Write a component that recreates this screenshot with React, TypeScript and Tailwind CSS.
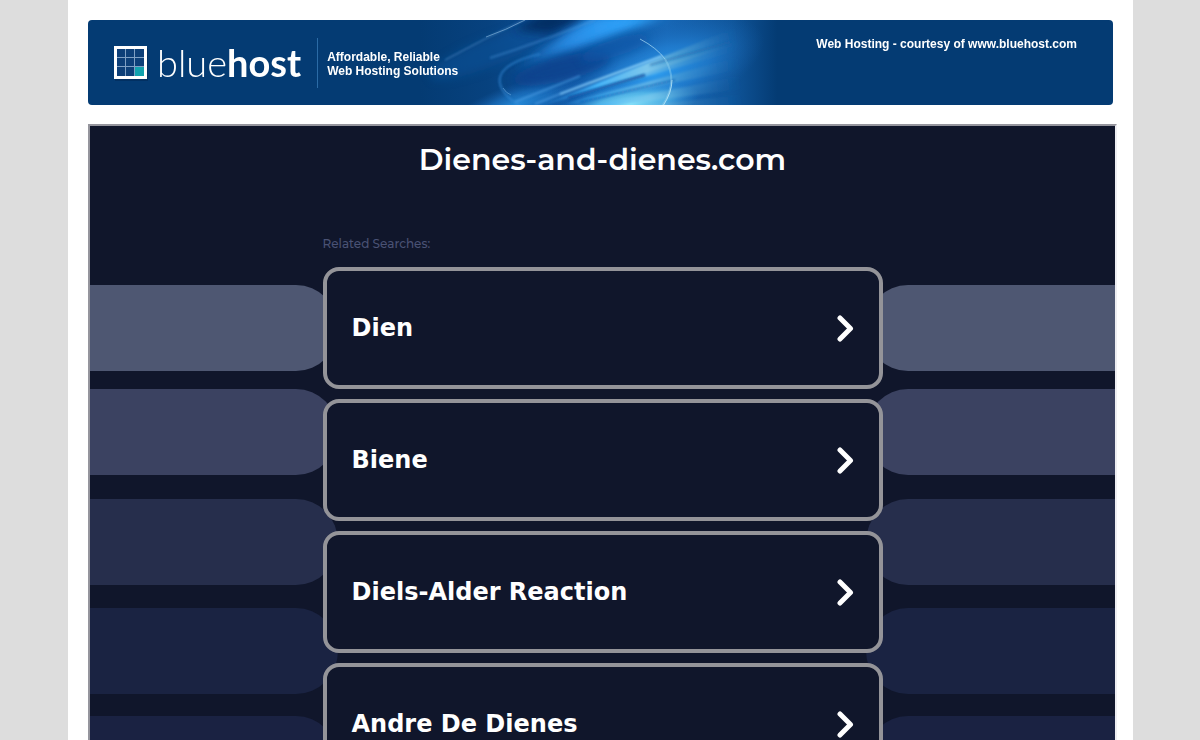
const searches = ['Dien', 'Biene', 'Diels-Alder Reaction', 'Andre De Dienes'];

const stripes = [
  { y: 159, color: '#4e5772' },
  { y: 263, color: '#3b4261' },
  { y: 373, color: '#262e4c' },
  { y: 482, color: '#1a2342' },
  { y: 590, color: '#1a2242' },
];

function GridLogo() {
  return (
    <svg className="size-9 shrink-0" viewBox="0 0 36 36" aria-hidden="true">
      <rect x="2" y="3" width="33" height="33" fill="#022a56" opacity=".6" />
      <rect x="1" y="1" width="33" height="33" fill="#fff" />
      <rect x="4" y="4" width="27" height="27" fill="#7fa0c4" />
      {[4, 13, 22].map((y) =>
        [4, 13, 22].map((x) => (
          <rect
            key={`${x}-${y}`}
            x={x}
            y={y}
            width={x === 22 ? 9 : 8}
            height={y === 22 ? 9 : 8}
            fill={x === 22 && y === 22 ? '#12a2ae' : '#0d3f78'}
          />
        )),
      )}
    </svg>
  );
}

function Swirl() {
  return (
    <svg
      className="pointer-events-none absolute top-0 left-[332px] h-full w-[380px]"
      viewBox="-20 0 380 85"
      preserveAspectRatio="none"
      aria-hidden="true"
    >
      <defs>
        <linearGradient id="base" x1="0" x2="1" y1="0" y2="0">
          <stop offset="0" stopColor="#043b73" />
          <stop offset=".18" stopColor="#07427f" />
          <stop offset=".4" stopColor="#0f54a0" />
          <stop offset=".65" stopColor="#1767b6" />
          <stop offset=".82" stopColor="#0f559a" />
          <stop offset=".94" stopColor="#043b73" />
          <stop offset="1" stopColor="#043b73" />
        </linearGradient>
        <linearGradient id="beam" gradientUnits="userSpaceOnUse" x1="70" x2="200" y1="55" y2="0">
          <stop offset="0" stopColor="#2b8de6" stopOpacity="0" />
          <stop offset=".5" stopColor="#2b94ee" stopOpacity=".75" />
          <stop offset="1" stopColor="#30a8ff" />
        </linearGradient>
        <linearGradient id="ray" gradientUnits="userSpaceOnUse" x1="105" x2="310" y1="60" y2="40">
          <stop offset="0" stopColor="#2f97e8" stopOpacity=".2" />
          <stop offset=".25" stopColor="#45b4f8" />
          <stop offset=".5" stopColor="#86cdee" stopOpacity=".9" />
          <stop offset=".68" stopColor="#5ba6cf" stopOpacity=".55" />
          <stop offset=".95" stopColor="#1f66aa" stopOpacity="0" />
        </linearGradient>
        <radialGradient id="glow">
          <stop offset="0" stopColor="#2fa0f2" stopOpacity=".95" />
          <stop offset=".5" stopColor="#2484d8" stopOpacity=".65" />
          <stop offset="1" stopColor="#1b66b4" stopOpacity="0" />
        </radialGradient>
        <radialGradient id="cyan">
          <stop offset="0" stopColor="#86e2fa" />
          <stop offset=".5" stopColor="#5cc0ec" stopOpacity=".8" />
          <stop offset="1" stopColor="#2f8ed8" stopOpacity="0" />
        </radialGradient>
        <filter id="soft1" x="-20%" y="-50%" width="140%" height="200%">
          <feGaussianBlur stdDeviation="1" />
        </filter>
        <filter id="soft4" x="-50%" y="-80%" width="200%" height="260%">
          <feGaussianBlur stdDeviation="5" />
        </filter>
      </defs>
      <rect x="-20" width="380" height="85" fill="url(#base)" />
      <ellipse cx="50" cy="32" rx="65" ry="14" fill="#0c559c" opacity=".5" transform="rotate(-22 50 32)" filter="url(#soft4)" />
      <path d="M75 10 L105 -8 H160 L110 14 Z" fill="#042659" opacity=".8" filter="url(#soft4)" />
      <ellipse cx="75" cy="86" rx="75" ry="22" fill="url(#glow)" opacity=".8" transform="rotate(-20 75 86)" />
      <ellipse cx="215" cy="54" rx="115" ry="46" fill="url(#glow)" transform="rotate(-20 215 54)" />
      <path d="M60 58 L150 -4 H225 L165 18 L120 32 Z" fill="url(#beam)" filter="url(#soft4)" />
      <path d="M70 52 L158 2 L200 -4 L150 20 Z" fill="url(#beam)" filter="url(#soft4)" />
      <ellipse cx="122" cy="49" rx="50" ry="12" fill="#0b428e" opacity=".85" transform="rotate(-14 122 49)" filter="url(#soft4)" />
      <ellipse cx="175" cy="28" rx="36" ry="8" fill="#1157a8" opacity=".75" transform="rotate(-18 175 28)" filter="url(#soft4)" />
      <ellipse cx="190" cy="84" rx="70" ry="20" fill="url(#cyan)" transform="rotate(-8 190 84)" />
      <g fill="url(#ray)" filter="url(#soft1)">
        <path d="M95 88 L310 2 L310 20 Z" />
        <path d="M115 82 L310 16 L310 27 Z" opacity=".7" />
        <path d="M110 88 L310 34 L310 47 Z" opacity=".65" />
        <path d="M120 92 L310 54 L310 68 Z" opacity=".6" />
        <path d="M130 94 L310 74 L310 92 Z" opacity=".5" />
      </g>
      <g filter="url(#soft1)" fill="none">
        <path d="M128 78 L205 55" stroke="#0b4f9f" strokeWidth="3" opacity=".75" />
        <path d="M140 82 L235 60" stroke="#0d5cb0" strokeWidth="2" opacity=".6" />
        <path d="M120 74 L222 36" stroke="#a0e0ff" strokeWidth="2" opacity=".8" />
        <path d="M210 45 L290 22" stroke="#1a62a8" strokeWidth="2" opacity=".5" />
        <path d="M5 40 Q45 18 88 -2" stroke="#5b9cd8" strokeWidth="1" opacity=".7" />
        <path d="M50 38 Q100 22 155 0" stroke="#4f9ae0" strokeWidth="2" opacity=".4" />
        <path d="M75 82 L140 56" stroke="#5aaaf0" strokeWidth="2" opacity=".5" />
        <path d="M95 84 L150 62" stroke="#5aaaf0" strokeWidth="2" opacity=".5" />
        <path d="M100 34 C66 42 54 54 62 69 Q67 78 80 86" stroke="#3288d6" strokeWidth="2" opacity=".6" />
      </g>
      <path d="M46 17 Q66 10 85 0" stroke="#a9d2f2" fill="none" strokeWidth="1" opacity=".5" />
      <path d="M63 68 Q66 73 71 75" stroke="#7fbcee" fill="none" strokeWidth="1" opacity=".5" />
      <path d="M200 19 Q217 28 225 39" stroke="#a4d8f4" fill="none" strokeWidth="1" opacity=".75" />
      <path d="M225 39 Q239 62 222 86" stroke="#8fd0f0" fill="none" strokeWidth="2" opacity=".45" />
      <path d="M232 60 Q232 72 223 86" stroke="#c4edfa" fill="none" strokeWidth="1" opacity=".7" />
    </svg>
  );
}

function Banner() {
  return (
    <header className="relative flex h-[85px] justify-between overflow-hidden rounded bg-[#043b73] pr-9 pl-[25px] font-['Liberation_Sans',Arial,sans-serif] text-xs font-bold text-white">
      <Swirl />
      <div className="relative flex items-center">
        <a href="#" className="flex items-center gap-2" aria-label="bluehost">
          <GridLogo />
          <span className="pb-0.5 font-[Lato,sans-serif] text-[38px] leading-10 font-light">
            blue<span className="font-bold">host</span>
          </span>
        </a>
        <p className="ml-4 flex h-[50px] items-center border-l border-[#2b6ba6] pt-0.5 pl-[9px] leading-[14px]">
          <span>
            Affordable, Reliable
            <br />
            Web Hosting Solutions
          </span>
        </p>
      </div>
      <a href="#" className="relative mt-4 leading-4">
        Web Hosting - courtesy of www.bluehost.com
      </a>
    </header>
  );
}

function Stripes() {
  return (
    <svg
      className="absolute inset-0 size-full"
      viewBox="0 0 1025 680"
      preserveAspectRatio="xMidYMin slice"
      aria-hidden="true"
    >
      {stripes.map(({ y, color }) => (
        <g key={y} fill={color}>
          <rect x="-600" y={y} width="848" height="86" rx="42" ry="43" />
          <rect x="776" y={y} width="848" height="86" rx="42" ry="43" />
        </g>
      ))}
    </svg>
  );
}

export default function App() {
  return (
    <div className="min-h-screen bg-[#ddd] pl-px">
      <div className="mx-auto min-h-screen w-full max-w-[1065px] bg-white px-5 pt-5">
        <Banner />
        <main className="relative mt-[19px] -mr-1 overflow-hidden border-2 border-t-[#95959d] border-r-[#eeeef2] border-b-[#eeeef2] border-l-[#95959d] bg-[#10162b]">
          <Stripes />
          <div className="relative mx-auto flex w-full max-w-[560px] flex-col pb-2.5">
            <h1 className="pt-4 text-center font-[Montserrat,Inter,sans-serif] text-[30px] leading-9 font-semibold text-white">
              Dienes-and-dienes.com
            </h1>
            <h2 className="mt-14 font-[Montserrat,Inter,sans-serif] text-xs leading-5 font-medium text-[#4a5274]">
              Related Searches:
            </h2>
            <ul className="mt-[13px] flex flex-col gap-2.5">
              {searches.map((label) => (
                <li key={label}>
                  <a
                    href="#"
                    className="flex h-[122px] items-center justify-between rounded-2xl border-4 border-[#949499] bg-[#10162b] px-[25px] font-['DejaVu_Sans',Verdana,sans-serif] text-2xl font-bold text-white"
                  >
                    {label}
                    <svg className="h-7 w-[18px]" viewBox="0 0 18 28" fill="none" aria-hidden="true">
                      <path
                        d="M4 4 L14.500 14.500 L4 25"
                        stroke="#fff"
                        strokeWidth="5"
                        strokeLinecap="round"
                        strokeLinejoin="round"
                      />
                    </svg>
                  </a>
                </li>
              ))}
            </ul>
          </div>
        </main>
      </div>
    </div>
  );
}
